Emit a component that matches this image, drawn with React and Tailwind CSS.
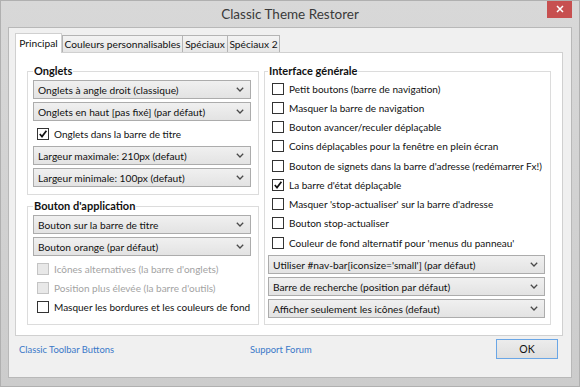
import React from "react";

const Chevron = () => (
  <svg width="8" height="5" viewBox="0 0 8 5" className="shrink-0">
    <path d="M0.8 0.8 L4 4 L7.2 0.8" fill="none" stroke="#4a4a4a" strokeWidth="1.3" />
  </svg>
);

const Select = ({ label }) => (
  <div className="h-[19px] flex items-center justify-between pl-[4px] pr-[6px] border border-[#acacac] bg-gradient-to-b from-[#f0f0f0] to-[#e3e3e3] text-[#111] text-[10.2px]">
    <span className="whitespace-nowrap">{label}</span>
    <Chevron />
  </div>
);

const Check = ({ label, checked, disabled }) => (
  <div className="h-[19.25px] flex items-center gap-[5px] pl-[4px]">
    <span
      className={
        disabled
          ? "w-[12px] h-[12px] shrink-0 border border-[#c4c4c4] bg-[#e8e8e8]"
          : "w-[12px] h-[12px] shrink-0 border border-[#333] bg-white flex items-center justify-center"
      }
    >
      {checked && (
        <svg width="10" height="10" viewBox="0 0 10 10">
          <path d="M1.8 5 L4 7.6 L8.4 1.8" fill="none" stroke="#111" strokeWidth="1.7" />
        </svg>
      )}
    </span>
    <span className={disabled ? "whitespace-nowrap text-[#a3a3a3]" : "whitespace-nowrap text-[#111]"}>{label}</span>
  </div>
);

const Group = ({ title, className, children }) => (
  <fieldset className={`min-w-0 border border-[#dcdcdc] ${className}`}>
    <legend className="px-[1px] font-bold text-[11px] leading-[14px] text-[#111]">{title}</legend>
    {children}
  </fieldset>
);

const tabs = [
  { label: "Principal", w: "w-[47px]", active: true },
  { label: "Couleurs personnalisables", w: "w-[121px]" },
  { label: "Spéciaux", w: "w-[46px] -ml-px" },
  { label: "Spéciaux 2", w: "w-[53px] -ml-px" },
];

export default function App() {
  return (
    <div className="w-[580px] h-[387px] flex flex-col bg-gradient-to-b from-[#d8d8d8] to-[#cccccc] border border-[#b0b0b0] [font-family:Lato,sans-serif] text-[10px] leading-[14px] overflow-hidden">
      {/* title bar */}
      <div className="h-[26px] grid grid-cols-[1fr_auto_1fr] items-start">
        <div />
        <div className="pt-[5px] text-[13.5px] leading-[17px] text-[#3a3a3a]">Classic Theme Restorer</div>
        <div className="flex justify-end pr-[7px] -mt-px">
          <div className="w-[25px] h-[18px] bg-[#c75050] flex items-center justify-center">
            <svg width="8" height="8" viewBox="0 0 8 8">
              <path d="M1 1 L7 7 M7 1 L1 7" stroke="#fff" strokeWidth="1.5" />
            </svg>
          </div>
        </div>
      </div>

      {/* client area */}
      <div className="flex-1 mx-[7px] mb-[8px] bg-[#f0f0f0] border border-[#b8b8b8] pt-[5px] pl-[6px] pr-[8px] flex flex-col">
        <div className="h-[19px] flex items-end text-[10.2px]">
          {tabs.map((t) =>
            t.active ? (
              <div
                key={t.label}
                className={`${t.w} h-[20px] -mb-px relative z-10 bg-white border-x border-t border-[#d0d0d0] flex items-center justify-center pb-[1px] text-[#111]`}
              >
                {t.label}
              </div>
            ) : (
              <div
                key={t.label}
                className={`${t.w} h-[17px] bg-gradient-to-b from-[#f3f3f3] to-[#e6e6e6] border-x border-t border-[#b4b4b4] flex items-center justify-center whitespace-nowrap text-[#111]`}
              >
                {t.label}
              </div>
            )
          )}
        </div>

        <div className="h-[284px] bg-white border border-[#d0d0d0] pt-[11px] pl-[11px] pr-[11px] flex gap-[5px] items-start">
          <div className="w-[232px] flex flex-col gap-[4px]">
            <Group title="Onglets" className="pl-[5px] pr-[7px] pb-[7px]">
              <div className="pt-[2px] flex flex-col gap-[3px]">
                <Select label="Onglets à angle droit (classique)" />
                <Select label="Onglets en haut [pas fixé] (par défaut)" />
                <Check label="Onglets dans la barre de titre" checked />
                <Select label="Largeur maximale: 210px (defaut)" />
                <Select label="Largeur minimale: 100px (defaut)" />
              </div>
            </Group>
            <Group title="Bouton d'application" className="pl-[5px] pr-[7px] pb-[7px]">
              <div className="pt-[2px] flex flex-col gap-[3px]">
                <Select label="Bouton sur la barre de titre" />
                <Select label="Bouton orange (par défaut)" />
                <div>
                  <Check label="Icônes alternatives (la barre d'onglets)" disabled />
                  <Check label="Position plus élevée (la barre d'outils)" disabled />
                  <Check label="Masquer les bordures et les couleurs de fond" />
                </div>
              </div>
            </Group>
          </div>

          <Group title="Interface générale" className="w-[287px] pl-[3px] pr-[5px] pb-[6px]">
            <div className="pt-[1px]">
              <Check label="Petit boutons (barre de navigation)" />
              <Check label="Masquer la barre de navigation" />
              <Check label="Bouton avancer/reculer déplaçable" />
              <Check label="Coins déplaçables pour la fenêtre en plein écran" />
              <Check label="Bouton de signets dans la barre d'adresse (redémarrer Fx!)" />
              <Check label="La barre d'état déplaçable" checked />
              <Check label="Masquer 'stop-actualiser' sur la barre d'adresse" />
              <Check label="Bouton stop-actualiser" />
              <Check label="Couleur de fond alternatif pour 'menus du panneau'" />
            </div>
            <div className="pt-[3px] flex flex-col gap-[3px]">
              <Select label="Utiliser #nav-bar[iconsize='small'] (par défaut)" />
              <Select label="Barre de recherche (position par défaut)" />
              <Select label="Afficher seulement les icônes (defaut)" />
            </div>
          </Group>
        </div>

        <div className="mt-[3px] h-[20px] flex items-center">
          <div className="w-[235px] pl-[4px] pt-[2px] text-[9.4px] text-[#3a78c8]">Classic Toolbar Buttons</div>
          <div className="pt-[2px] text-[9.4px] text-[#3a78c8]">Support Forum</div>
          <div className="ml-auto mr-[5px] w-[62px] h-[20px] border border-[#6aa6e6] bg-gradient-to-b from-[#ececec] to-[#dfdfdf] flex items-center justify-center text-[10.5px] text-[#111]">
            OK
          </div>
        </div>
      </div>
    </div>
  );
}
